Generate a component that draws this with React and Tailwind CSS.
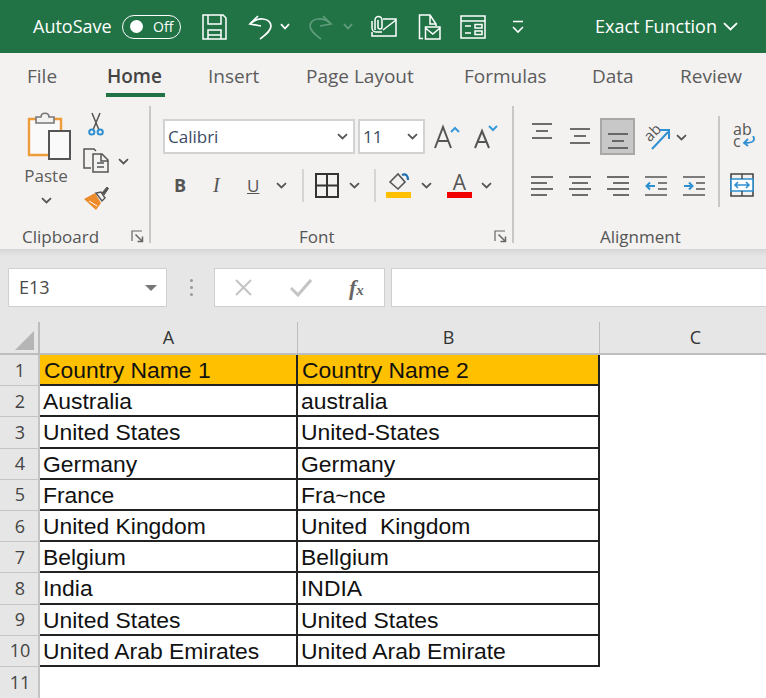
import React from "react";

const sans = "font-['Open_Sans','Noto_Sans',sans-serif]";

function Chev({ c = "#555", w = 11, h = 7, className = "" }) {
  return (
    <svg width={w} height={h} viewBox={`0 0 ${w} ${h}`} className={className} fill="none">
      <path d={`M1 1.2 L${w / 2} ${h - 1.5} L${w - 1} 1.2`} stroke={c} strokeWidth="1.8" />
    </svg>
  );
}

function Lines({ rows }) {
  return (
    <svg width="22" height="22" viewBox="0 0 22 22" fill="none" stroke="#555" strokeWidth="1.7">
      {rows.map((r, i) => (
        <path key={i} d={`M${r[0]} ${r[2]} H${r[1]}`} />
      ))}
    </svg>
  );
}

function Launcher() {
  return (
    <svg width="13" height="13" viewBox="0 0 13 13" fill="none" stroke="#666" strokeWidth="1.2">
      <path d="M1 11 V1 H11" />
      <path d="M4.5 4.5 L11.5 11.5 M11.5 6.5 V11.5 H6.5" strokeWidth="1.5" />
    </svg>
  );
}

function Group({ width, label, labelPad, launcher, children }) {
  return (
    <div className={`flex h-[143px] flex-col ${width}`}>
      <div className="h-[119px]">{children}</div>
      <div className={`relative flex h-[24px] items-center text-[17px] text-[#555] ${labelPad}`}>
        <span>{label}</span>
        {launcher && (
          <span className="absolute right-[5px] top-[5px]">
            <Launcher />
          </span>
        )}
      </div>
    </div>
  );
}

function Sep({ className = "h-[137px]" }) {
  return <div className={`w-[2px] shrink-0 bg-[#c8c8c8] ${className}`} />;
}

const rows = [
  ["Country Name 1", "Country Name 2"],
  ["Australia", "australia"],
  ["United States", "United-States"],
  ["Germany", "Germany"],
  ["France", "Fra~nce"],
  ["United Kingdom", "United  Kingdom"],
  ["Belgium", "Bellgium"],
  ["India", "INDIA"],
  ["United States", "United States"],
  ["United Arab Emirates", "United Arab Emirate"],
];

function TitleBar() {
  return (
    <div className={`flex h-[53px] items-center bg-[#217346] pl-[33px] text-white ${sans}`}>
      <span className="w-[78px] whitespace-nowrap text-[18px]">AutoSave</span>
      <div className="ml-[11px] flex h-[24px] w-[59px] items-center rounded-full border-[1.5px] border-white pl-[7px]">
        <span className="h-[13px] w-[13px] rounded-full bg-white" />
        <span className="ml-[10px] text-[14px] leading-none">Off</span>
      </div>
      <svg className="ml-[21px]" width="25" height="26" viewBox="0 0 25 26" fill="none" stroke="#fff" strokeWidth="1.5">
        <path d="M1 1 H21 L24 4 V25 H1 Z" />
        <path d="M6 1 V10 H19 V1 M6 25 V16 H19 V25 M6 21 H19" />
      </svg>
      <svg className="ml-[21px]" width="24" height="26" viewBox="0 0 24 26" fill="none" stroke="#fff" strokeWidth="1.7">
        <path d="M10 2 L2 10 L13 12" />
        <path d="M2 10 C9 3 22 3 23 12 C23 17 17 21 12 25" />
      </svg>
      <Chev c="#fff" w={10} className="ml-[8px]" />
      <svg className="ml-[19px]" width="24" height="26" viewBox="0 0 24 26" fill="none" stroke="#5f9c7c" strokeWidth="1.7">
        <path d="M14 2 L22 10 L11 12" />
        <path d="M22 10 C15 3 2 3 1 12 C1 17 7 21 12 25" />
      </svg>
      <Chev c="#5f9c7c" w={10} className="ml-[10px]" />
      <svg className="ml-[17px]" width="27" height="23" viewBox="0 0 27 23" fill="none" stroke="#fff" strokeWidth="1.5">
        <path d="M13 4 H26 V21 H2 V17" />
        <path d="M13 15 L26 5" />
        <path d="M5 15 V5 A3.5 3.5 0 0 1 12 5 V12 A2 2 0 0 1 8 12 V5" />
        <path d="M2 6 V13 A4 4 0 0 0 6 17 H12" />
      </svg>
      <svg className="ml-[21px]" width="23" height="26" viewBox="0 0 23 26" fill="none" stroke="#fff" strokeWidth="1.5">
        <path d="M5 24.5 H1.5 V1 H12 L18 10 V12 M12 1 V10 H18" />
        <path d="M7.5 13 H22 V25 H7.5 Z M7.5 14 L14.75 20 L22 14" />
      </svg>
      <svg className="ml-[19px]" width="26" height="24" viewBox="0 0 26 24" fill="none" stroke="#fff" strokeWidth="1.5">
        <path d="M1 1 H25 V23 H1 Z M1 6 H25" />
        <path d="M15 9.5 H22 V13 H15 Z M15 16 H22 V19.5 H15 Z M5 11 H11 M5 18 H11" />
      </svg>
      <svg className="ml-[26px]" width="12" height="14" viewBox="0 0 12 14" fill="none" stroke="#fff" strokeWidth="1.6">
        <path d="M1 1.5 H11 M1 7 L6 12 L11 7" />
      </svg>
      <span className="ml-[71px] w-[120px] whitespace-nowrap text-[18px]">Exact Function</span>
      <Chev c="#fff" w={15} h={9} className="ml-[8px]" />
    </div>
  );
}

function Tabs() {
  const tabs = [
    ["File", "ml-[27px] w-[29px]"],
    ["Home", "ml-[51px] w-[57px]"],
    ["Insert", "ml-[44px] w-[50px]"],
    ["Page Layout", "ml-[48px] w-[112px]"],
    ["Formulas", "ml-[46px] w-[83px]"],
    ["Data", "ml-[45px] w-[42px]"],
    ["Review", "ml-[46px] w-[63px]"],
  ];
  return (
    <div className="flex h-[47px] items-center text-[19px] text-[#5c5c5c]">
      {tabs.map(([t, c]) => (
        <span
          key={t}
          className={`relative shrink-0 whitespace-nowrap ${c} ${t === "Home" ? "font-semibold text-[#444]" : ""}`}
        >
          {t}
          {t === "Home" && <span className="absolute -bottom-[6px] -left-[1px] -right-[1px] h-[4px] bg-[#217346]" />}
        </span>
      ))}
    </div>
  );
}

function Clipboard() {
  return (
    <Group width="w-[149px]" label="Clipboard" labelPad="pl-[22px]" launcher>
      <div className="flex pt-[6px]">
        <div className="ml-[20px] flex w-[52px] flex-col items-center">
          <svg width="52" height="48" viewBox="0 0 52 48" fill="none">
            <path d="M9 7 H41 V43 H9 Z" fill="#fafafa" stroke="#ed9c3a" strokeWidth="2.4" />
            <path d="M16 11 V5 H21 C21 0 29 0 29 5 H34 V11 Z" fill="#f3f2f1" stroke="#777" strokeWidth="1.6" />
            <path d="M29 19 H50 V47 H29 Z" fill="#fafafa" stroke="#555" strokeWidth="2" />
          </svg>
          <span className="mt-[4px] h-[24px] text-[17px] leading-[24px] text-[#5c5c5c]">Paste</span>
          <Chev className="mt-[9px]" />
        </div>
        <div className="ml-[11px] flex flex-col">
          <svg className="ml-[5px]" width="16" height="24" viewBox="0 0 16 24" fill="none">
            <path d="M12 1 L5 18 M4 1 L11 18" stroke="#555" strokeWidth="1.5" />
            <circle cx="3.8" cy="20" r="2.6" stroke="#2f8fd0" strokeWidth="2" />
            <circle cx="12.2" cy="20" r="2.6" stroke="#2f8fd0" strokeWidth="2" />
          </svg>
          <div className="mt-[12px] flex h-[25px] items-center">
            <svg width="26" height="25" viewBox="0 0 26 25" fill="none" stroke="#555" strokeWidth="1.5">
              <path d="M8 20 H1 V1 H11 L13 3" />
              <path d="M10 6 H19 L25 12 V24 H10 Z M18 6 V13 H25 M14 15 H21 M14 19 H21" />
            </svg>
            <Chev className="ml-[9px] mt-[2px]" />
          </div>
          <svg className="mt-[13px]" width="26" height="24" viewBox="0 0 26 24" fill="none">
            <path d="M1 13 L12 7 L18 17 L13 24 Z" fill="#ed8a2c" />
            <path d="M6 15 L14 20" stroke="#fff" strokeWidth="1" />
            <path d="M13 7 L19 15 L22 12 L18 6 Z" fill="#f3f2f1" stroke="#555" strokeWidth="1.4" />
            <path d="M19 7 L24 1 L25.5 2.5 L21 9" fill="#555" stroke="#555" strokeWidth="1" />
          </svg>
        </div>
      </div>
    </Group>
  );
}

function Select({ width, label, className = "" }) {
  return (
    <div
      className={`flex h-[35px] items-center justify-between border-2 border-[#d2d2d2] bg-white pl-[3px] pr-[5px] text-[17px] text-[#3b4a63] ${width} ${className}`}
    >
      <span>{label}</span>
      <Chev />
    </div>
  );
}

function FontGroup() {
  return (
    <Group width="w-[361px]" label="Font" labelPad="pl-[148px]" launcher>
      <div className="flex items-center pl-[12px] pt-[13px]">
        <Select width="w-[192px]" label="Calibri" />
        <Select width="w-[67px]" label="11" className="ml-[3px]" />
        <svg className="ml-[9px]" width="26" height="26" viewBox="0 0 26 26" fill="none">
          <path d="M1 24 L9 3 L17 24 M4 17 H14" stroke="#555" strokeWidth="2" />
          <path d="M17 8 L21 4 L25 8" stroke="#3a9ad9" strokeWidth="2" />
        </svg>
        <svg className="ml-[14px]" width="24" height="26" viewBox="0 0 24 26" fill="none">
          <path d="M1 24 L8 7 L15 24 M3.5 18 H12.5" stroke="#555" strokeWidth="2" />
          <path d="M15 2 L19 6 L23 2" stroke="#3a9ad9" strokeWidth="2" />
        </svg>
      </div>
      <div className="mt-[18px] flex h-[26px] items-center pl-[23px] text-[#555]">
        <span className="w-[12px] text-[18px] font-bold leading-none">B</span>
        <span className="ml-[27px] w-[9px] font-['Liberation_Serif',serif] text-[20px] italic leading-none">I</span>
        <span className="ml-[25px] w-[15px] text-[17px] leading-none underline">U</span>
        <Chev className="ml-[14px]" />
        <div className="ml-[15px] h-[33px] w-[2px] bg-[#d5d5d5]" />
        <svg className="ml-[11px]" width="24" height="25" viewBox="0 0 24 25" fill="none" stroke="#333" strokeWidth="2">
          <path d="M1 1 H23 V24 H1 Z M12 1 V24 M1 12.5 H23" />
        </svg>
        <Chev className="ml-[10px]" />
        <div className="ml-[14px] h-[33px] w-[2px] bg-[#d5d5d5]" />
        <div className="ml-[10px] flex w-[25px] flex-col">
          <svg width="25" height="20" viewBox="0 0 25 20" fill="none">
            <path d="M4 10 L12 2 L19 10 L12 17 Z" stroke="#555" strokeWidth="1.6" />
            <path d="M16 3 C20 1 22 4 22 8" stroke="#1f6fb0" strokeWidth="2.2" />
          </svg>
          <div className="h-[6px] bg-[#ffc000]" />
        </div>
        <Chev className="ml-[10px]" />
        <div className="ml-[15px] flex w-[25px] flex-col items-center">
          <span className="h-[20px] text-[21px] leading-[20px] text-[#555]">A</span>
          <div className="h-[6px] w-full bg-[#f00000]" />
        </div>
        <Chev className="ml-[9px]" />
      </div>
    </Group>
  );
}

const top3 = [[1, 21, 2], [5, 17, 9], [1, 21, 16]];
const left = [[0, 22, 2], [0, 16, 8], [0, 22, 14], [0, 16, 20]];
const center = [[0, 22, 2], [3, 19, 8], [0, 22, 14], [3, 19, 20]];
const right = [[0, 22, 2], [6, 22, 8], [0, 22, 14], [6, 22, 20]];

function Indent({ flip }) {
  return (
    <svg width="22" height="22" viewBox="0 0 22 22" fill="none">
      <path d="M0 2 H22 M0 20 H22 M13 8 H22 M13 14 H22" stroke="#555" strokeWidth="1.7" />
      <path d={flip ? "M1 11 H9 M6 7.5 L9.5 11 L6 14.5" : "M10 11 H2 M5 7.5 L1.5 11 L5 14.5"} stroke="#2f8fd0" strokeWidth="2" />
    </svg>
  );
}

function Alignment() {
  return (
    <Group width="w-[204px]" label="Alignment" labelPad="pl-[86px]">
      <div className="flex items-center pl-[17px] pt-[12px]">
        <div className="h-[37px] w-[22px] pt-[4px]">
          <Lines rows={top3} />
        </div>
        <div className="ml-[16px] h-[37px] w-[22px] pt-[9px]">
          <Lines rows={top3} />
        </div>
        <div className="ml-[9px] h-[37px] w-[35px] border-2 border-[#a8a8a8] bg-[#c8c8c8] pl-[5px] pt-[12px]">
          <Lines rows={top3} />
        </div>
        <div className="relative ml-[9px] h-[27px] w-[26px]">
          <span className="absolute left-[-1px] top-[0px] origin-center -rotate-45 text-[15px] leading-[18px] text-[#555]">ab</span>
          <svg className="absolute left-0 top-0" width="26" height="27" viewBox="0 0 26 27" fill="none">
            <path d="M8 26 L24 9 M16 7 H25 V16" stroke="#2f8fd0" strokeWidth="2" />
          </svg>
        </div>
        <Chev className="ml-[6px] mt-[2px]" />
      </div>
      <div className="mt-[20px] flex gap-x-[16px] pl-[17px]">
        <Lines rows={left} />
        <Lines rows={center} />
        <Lines rows={right} />
        <Indent />
        <Indent flip />
      </div>
    </Group>
  );
}

function Wrap() {
  return (
    <div className="flex-1 overflow-hidden pl-[10px] pt-[17px]">
      <div className="relative ml-[3px] h-[25px] w-[24px]">
        <p className="w-[20px] text-[16px] leading-[12px] text-[#555]">ab c</p>
        <svg className="absolute left-[9px] top-[13px]" width="14" height="11" viewBox="0 0 14 11" fill="none" stroke="#2f8fd0" strokeWidth="1.8">
          <path d="M11 0 C14 5 10 7 3 7 M6 3 L2 7 L6 10" />
        </svg>
      </div>
      <svg className="mt-[25px]" width="24" height="24" viewBox="0 0 24 24" fill="none">
        <path d="M1 1 H23 V23 H1 Z" stroke="#444" strokeWidth="1.6" />
        <path d="M1 6 H23 V18 H1 Z" stroke="#2f8fd0" strokeWidth="1.6" fill="#fff" />
        <path d="M5 12 H19 M8 9 L5 12 L8 15 M16 9 L19 12 L16 15" stroke="#2f8fd0" strokeWidth="1.6" />
        <path d="M12 1 V6 M12 18 V23" stroke="#444" strokeWidth="1.4" />
      </svg>
    </div>
  );
}

function Ribbon() {
  return (
    <div className="flex h-[149px] items-start pt-[6px]">
      <Clipboard />
      <Sep />
      <FontGroup />
      <Sep />
      <Alignment />
      <Sep className="mt-[10px] h-[91px]" />
      <Wrap />
    </div>
  );
}

function FormulaBar() {
  return (
    <div className="flex h-[73px] bg-gradient-to-b from-[#d6d6d6] from-0% to-[#e6e6e6] to-[10%] pl-[8px] pt-[19px]">
      <div className="flex h-[39px] w-[159px] items-center justify-between rounded-[1px] border border-[#cfcfcf] bg-white pl-[10px] pr-[9px] text-[18px] text-[#4a4a4a]">
        <span>E13</span>
        <span className="h-0 w-0 border-x-[6px] border-t-[6px] border-x-transparent border-t-[#777]" />
      </div>
      <div className="ml-[21px] flex w-[6px] flex-col items-center gap-y-[4px] pt-[11px]">
        <span className="h-[3px] w-[3px] rounded-full bg-[#999]" />
        <span className="h-[3px] w-[3px] rounded-full bg-[#999]" />
        <span className="h-[3px] w-[3px] rounded-full bg-[#999]" />
      </div>
      <div className="ml-[20px] flex h-[39px] w-[171px] items-center border border-[#cfcfcf] bg-white pl-[20px]">
        <svg width="17" height="17" viewBox="0 0 17 17" fill="none" stroke="#c4c4c4" strokeWidth="2">
          <path d="M1 1 L16 16 M16 1 L1 16" />
        </svg>
        <svg className="ml-[38px]" width="22" height="18" viewBox="0 0 22 18" fill="none" stroke="#c4c4c4" strokeWidth="3">
          <path d="M1 9 L8 16 L21 1" />
        </svg>
        <span className="ml-[37px] whitespace-nowrap font-['Liberation_Serif',serif] text-[22px] font-bold italic leading-none text-[#666]">
          f<span className="text-[15px]">x</span>
        </span>
      </div>
      <div className="ml-[6px] h-[39px] flex-1 border border-[#cfcfcf] border-r-0 bg-white" />
    </div>
  );
}

function Sheet() {
  const cell = "h-[31.2px] border-b-2 border-r-2 border-[#222] whitespace-pre";
  return (
    <div className="grid grid-cols-[40px_258px_302px_192px] bg-white font-['Liberation_Sans',Arial,sans-serif] text-[22.9px] leading-[31px] text-[#111]">
      <div className="flex h-[33px] items-end justify-end border-b-2 border-r-2 border-[#bdbdbd] bg-[#e6e6e6] pb-[3px] pr-[4px]">
        <span className="h-0 w-0 border-b-[19px] border-l-[19px] border-b-[#b5b5b5] border-l-transparent" />
      </div>
      {["A", "B", "C"].map((c) => (
        <div
          key={c}
          className={`flex h-[33px] items-center justify-center border-b-2 border-r border-[#bdbdbd] bg-[#e6e6e6] text-[#333] ${sans} text-[18px]`}
        >
          {c}
        </div>
      ))}
      {rows.map((r, i) => (
        <React.Fragment key={i}>
          <div className={`flex h-[31.2px] items-center justify-center border-b border-r-2 border-[#c4c4c4] bg-[#e6e6e6] pl-[2px] text-[18px] text-[#444] ${sans}`}>
            {i + 1}
          </div>
          <div className={`${cell} ${i === 0 ? "bg-[#ffc000] pl-[4px]" : "pl-[3px]"}`}>{r[0]}</div>
          <div className={`${cell} ${i === 0 ? "bg-[#ffc000] pl-[4px]" : "pl-[3px]"}`}>{r[1]}</div>
          <div className="h-[31.2px]" />
        </React.Fragment>
      ))}
      <div className={`flex h-[32px] items-center justify-center border-r-2 border-[#c4c4c4] bg-[#e6e6e6] pl-[2px] text-[18px] text-[#444] ${sans}`}>
        11
      </div>
    </div>
  );
}

export default function App() {
  return (
    <div className={`h-[698px] w-[766px] overflow-hidden bg-[#f3f2f1] ${sans}`}>
      <TitleBar />
      <Tabs />
      <Ribbon />
      <FormulaBar />
      <Sheet />
    </div>
  );
}
